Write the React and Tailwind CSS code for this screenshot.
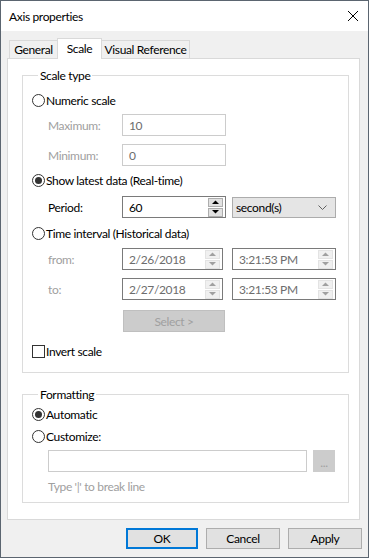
import React from "react";

function Radio({ checked, label }) {
  return (
    <div className="flex items-center h-[16px]">
      <span className="w-[13px] h-[13px] rounded-full border border-[#333333] bg-white flex items-center justify-center shrink-0">
        {checked && <span className="w-[7px] h-[7px] rounded-full bg-[#333333]" />}
      </span>
      <span className="ml-[1px] text-black whitespace-nowrap">{label}</span>
    </div>
  );
}

function Tri({ up, color }) {
  return (
    <svg width="7" height="4" viewBox="0 0 7 4">
      {up ? <path d="M0 4L3.5 0.5L7 4Z" fill={color} /> : <path d="M0 0L3.5 3.5L7 0Z" fill={color} />}
    </svg>
  );
}

function Spin({ enabled }) {
  const btn = enabled ? "border-[#adadad] bg-[#e1e1e1]" : "border-[#e3e3e3] bg-[#f0f0f0]";
  const c = enabled ? "#000000" : "#a0a0a0";
  return (
    <div className="flex flex-col gap-px">
      <div className={"w-[15px] h-[9px] border flex items-center justify-center " + btn}>
        <Tri up color={c} />
      </div>
      <div className={"w-[15px] h-[9px] border flex items-center justify-center " + btn}>
        <Tri color={c} />
      </div>
    </div>
  );
}

function SpinBox({ value, enabled, width }) {
  return (
    <div
      className={
        "h-[22px] border bg-white flex items-center justify-between pl-[6px] pr-[2px] " +
        (enabled ? "border-[#7a7a7a] text-black " : "border-[#7a7a7a] text-[#6d6d6d] ") +
        width
      }
    >
      <span>{value}</span>
      <Spin enabled={enabled} />
    </div>
  );
}

export default function App() {
  return (
    <div className="w-[369px] h-[558px] border border-[#5b6570] bg-[#f0f0f0] flex flex-col font-['Segoe_UI','Lato',sans-serif] text-[12px] leading-[15px] tracking-[-0.35px] text-black overflow-hidden">
      {/* Title bar */}
      <div className="h-[30px] bg-white flex items-center justify-between pl-[8px] pr-[10px] shrink-0">
        <span className="text-[12px]">Axis properties</span>
        <svg width="10" height="10" viewBox="0 0 10 10">
          <path d="M0 0L10 10M10 0L0 10" stroke="#000" strokeWidth="1" />
        </svg>
      </div>

      <div className="px-[6px] flex flex-col">
        {/* Tabs */}
        <div className="mt-[7px] pl-[2px] flex items-end h-[20px] relative z-10 whitespace-nowrap">
          <div className="w-[48px] h-[18px] border-l border-t border-[#d9d9d9] bg-[#f0f0f0] flex items-center justify-center">
            General
          </div>
          <div className="w-[45px] h-[21px] -mb-px border-l border-t border-r border-[#d9d9d9] bg-white flex items-start justify-center pt-[2px]">
            Scale
          </div>
          <div className="w-[88px] h-[18px] border-t border-r border-[#d9d9d9] bg-[#f0f0f0] flex items-center justify-center">
            Visual Reference
          </div>
        </div>

        {/* Panel */}
        <div className="w-[353px] h-[462px] border border-[#d9d9d9] bg-white pl-[14px] flex flex-col">
          <fieldset className="mt-[9px] w-[327px] h-[305px] border border-[#dcdcdc] pl-[9px] pt-[9px] flex flex-col">
            <legend className="ml-[6px] px-[2px] leading-[15px]">Scale type</legend>
            <Radio label="Numeric scale" />
            <div className="mt-[6px] flex items-center">
              <span className="ml-[16px] w-[74px] text-[#a0a0a0]">Maximum:</span>
              <div className="w-[104px] h-[22px] border border-[#cccccc] bg-white flex items-center pl-[6px] text-[#6d6d6d]">10</div>
            </div>
            <div className="mt-[8px] flex items-center">
              <span className="ml-[16px] w-[74px] text-[#a0a0a0]">Minimum:</span>
              <div className="w-[104px] h-[22px] border border-[#cccccc] bg-white flex items-center pl-[6px] text-[#6d6d6d]">0</div>
            </div>
            <div className="mt-[6px]">
              <Radio checked label="Show latest data (Real-time)" />
            </div>
            <div className="mt-[8px] flex items-center">
              <span className="ml-[16px] w-[74px]">Period:</span>
              <SpinBox value="60" enabled width="w-[104px]" />
              <div className="ml-[6px] w-[104px] h-[21px] border border-[#acacac] bg-[#e5e5e5] flex items-center justify-between pl-[3px] pr-[8px]">
                <span>second(s)</span>
                <svg width="9" height="5" viewBox="0 0 9 5">
                  <path d="M0.5 0.5L4.5 4.5L8.5 0.5" stroke="#606060" fill="none" strokeWidth="1" />
                </svg>
              </div>
            </div>
            <div className="mt-[7px]">
              <Radio label="Time interval (Historical data)" />
            </div>
            <div className="mt-[7px] flex items-center">
              <span className="ml-[16px] w-[74px] text-[#a0a0a0]">from:</span>
              <SpinBox value="2/26/2018" width="w-[101px]" />
              <div className="ml-[9px]">
                <SpinBox value="3:21:53 PM" width="w-[104px]" />
              </div>
            </div>
            <div className="mt-[8px] flex items-center">
              <span className="ml-[16px] w-[74px] text-[#a0a0a0]">to:</span>
              <SpinBox value="2/27/2018" width="w-[101px]" />
              <div className="ml-[9px]">
                <SpinBox value="3:21:53 PM" width="w-[104px]" />
              </div>
            </div>
            <div className="mt-[10px] flex">
              <div className="ml-[91px] w-[102px] h-[22px] border border-[#bfbfbf] bg-[#cccccc] flex items-center justify-center text-[#a0a0a0]">
                Select &gt;
              </div>
            </div>
            <div className="mt-[11px] flex items-center h-[16px]">
              <span className="w-[13px] h-[13px] border border-[#333333] bg-white shrink-0" />
              <span className="ml-[1px]">Invert scale</span>
            </div>
          </fieldset>

          <fieldset className="mt-[14px] w-[327px] h-[116px] border border-[#dcdcdc] pl-[9px] pt-[4px] flex flex-col">
            <legend className="ml-[6px] px-[2px] leading-[15px]">Formatting</legend>
            <Radio checked label="Automatic" />
            <div className="mt-[6px]">
              <Radio label="Customize:" />
            </div>
            <div className="mt-[6px] ml-[16px] flex items-center">
              <div className="w-[259px] h-[22px] border border-[#cccccc] bg-white" />
              <div className="ml-[6px] w-[22px] h-[22px] border border-[#cccccc] bg-[#cccccc] flex items-end justify-center pb-[4px] text-[#a0a0a0] leading-[8px]">
                ...
              </div>
            </div>
            <div className="mt-[7px] ml-[16px] text-[#a0a0a0]">Type '|' to break line</div>
          </fieldset>
        </div>

        {/* Buttons */}
        <div className="mt-[8px] flex justify-end gap-[8px]">
          <div className="w-[72px] h-[21px] border-2 border-[#0078d7] bg-[#e1e1e1] flex items-center justify-center">OK</div>
          <div className="w-[74px] h-[21px] border border-[#adadad] bg-[#e1e1e1] flex items-center justify-center">Cancel</div>
          <div className="w-[74px] h-[21px] border border-[#adadad] bg-[#e1e1e1] flex items-center justify-center">Apply</div>
        </div>
      </div>
    </div>
  );
}
